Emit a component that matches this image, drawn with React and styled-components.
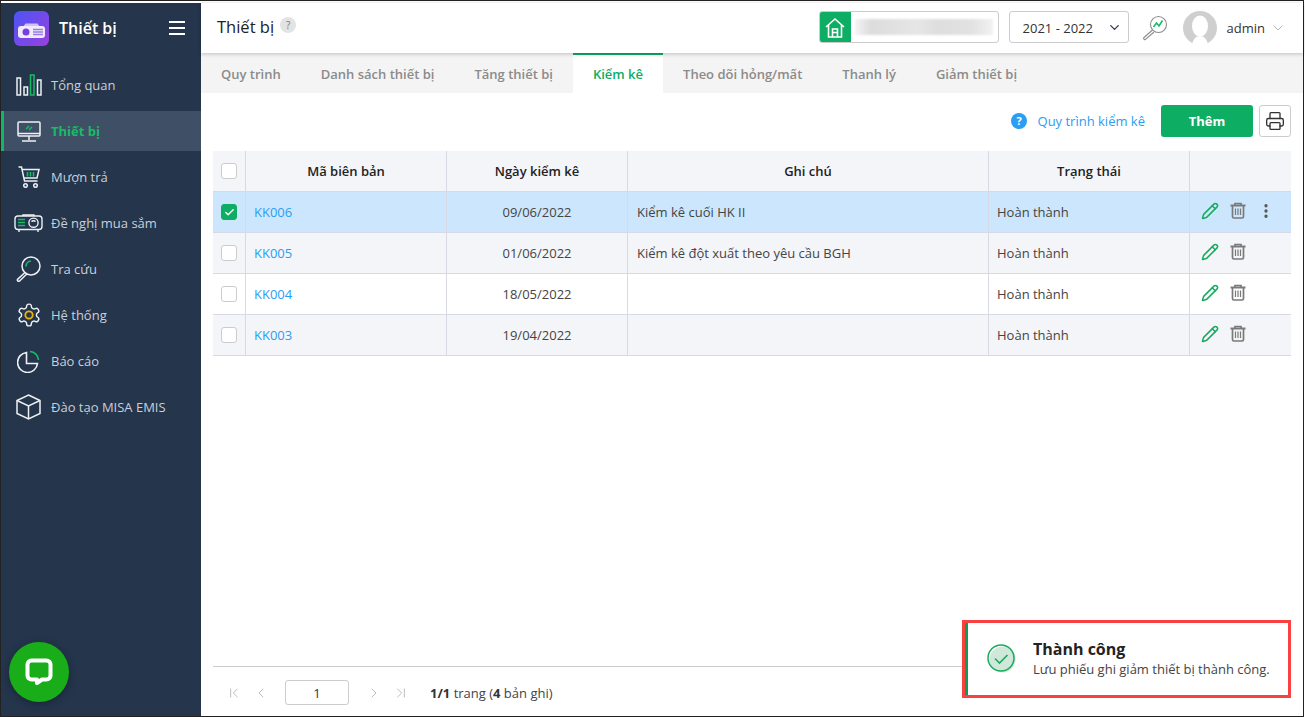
import React from 'react'
import styled, { createGlobalStyle } from 'styled-components'
import { ChevronDown, ChevronLeft, ChevronRight, ChevronFirst, ChevronLast, Check, Printer, Pencil, MoreVertical } from 'lucide-react'

const GlobalStyle = createGlobalStyle`
  html, body {
    margin: 0;
    padding: 0;
    background: #fff;
    overflow: hidden;
  }
  * {
    box-sizing: border-box;
  }
`

const Frame = styled.div`
  position: relative;
  width: 1304px;
  height: 717px;
  padding-top: 2px;
  border: 1px solid #222;
  display: flex;
  font-family: 'Open Sans', 'Noto Sans', sans-serif;
  font-size: 13px;
  color: #333;
  background: #fff;
`

const Sidebar = styled.aside`
  width: 200px;
  flex: none;
  background: #24354c;
  display: flex;
  flex-direction: column;
`

const Brand = styled.div`
  height: 62px;
  padding: 8px 16px 0 13px;
  display: flex;
  align-items: flex-start;
  gap: 10px;
`

const BrandTitle = styled.div`
  flex: 1;
  font-size: 16px;
  font-weight: 600;
  color: #fff;
  line-height: 34px;
`

const Burger = styled.div`
  width: 16px;
  margin-top: 10px;
  height: 14px;
  border-top: 2px solid #fff;
  border-bottom: 2px solid #fff;
  position: relative;
  &::after {
    content: '';
    position: absolute;
    left: 0;
    right: 0;
    top: 4px;
    height: 2px;
    background: #fff;
  }
`

const Menu = styled.nav`
  display: flex;
  flex-direction: column;
  gap: 6px;
`

const MenuItem = styled.div`
  height: 40px;
  display: flex;
  align-items: center;
  gap: 8px;
  padding-left: ${p => (p.$active ? '10px' : '13px')};
  border-left: ${p => (p.$active ? '3px solid #10b866' : 'none')};
  background: ${p => (p.$active ? '#3f4f65' : 'transparent')};
  color: ${p => (p.$active ? '#19bb67' : '#c9d0d8')};
  font-weight: ${p => (p.$active ? 700 : 400)};
`

const MenuIcon = styled.span`
  width: 29px;
  height: 30px;
  display: flex;
  align-items: center;
  justify-content: center;
  flex: none;
`

const ChatButton = styled.div`
  position: absolute;
  left: 8px;
  top: 641px;
  width: 60px;
  height: 60px;
  border-radius: 50%;
  background: #19ad19;
  box-shadow: 0 2px 8px rgba(0, 0, 0, 0.3);
  display: flex;
  align-items: center;
  justify-content: center;
`

const Main = styled.main`
  flex: 1;
  min-width: 0;
  display: flex;
  flex-direction: column;
`

const Header = styled.header`
  height: 50px;
  flex: none;
  padding: 0 17px 0 16px;
  display: flex;
  align-items: center;
  box-shadow: 0 1px 4px rgba(0, 0, 0, 0.22);
  position: relative;
  z-index: 1;
`

const PageTitle = styled.h1`
  margin: 0 6px 4px 0;
  font-size: 16.5px;
  font-weight: 400;
  color: #222;
`

const HelpDot = styled.span`
  width: 16px;
  height: 16px;
  border-radius: 50%;
  background: #e3e3e3;
  color: #777;
  font-size: 10px;
  text-align: center;
  line-height: 16px;
  margin-bottom: 6px;
`

const Spacer = styled.div`
  flex: 1;
`

const SchoolBox = styled.div`
  width: 180px;
  height: 32px;
  border: 1px solid #ccc;
  border-radius: 3px;
  display: flex;
  align-items: center;
  overflow: hidden;
  margin-right: 10px;
  margin-bottom: 2px;
`

const HomeBadge = styled.div`
  width: 31px;
  height: 32px;
  background: #0ead64;
  display: flex;
  align-items: center;
  justify-content: center;
  flex: none;
`

const BlurName = styled.div`
  width: 138px;
  height: 16px;
  margin-left: 4px;
  background: linear-gradient(90deg, #f4f4f4, #dcdcdc 12%, #e6e6e6 45%, #dedede 60%, #e2e2e2 85%, #f2f2f2);
  filter: blur(1px);
`

const YearSelect = styled.div`
  width: 120px;
  height: 32px;
  border: 1px solid #ccc;
  border-radius: 3px;
  padding: 1px 6px 0 13px;
  display: flex;
  align-items: center;
  justify-content: space-between;
  color: #333;
  font-size: 13px;
  margin-right: 13px;
  margin-bottom: 2px;
`

const UserName = styled.span`
  margin: 0 5px 0 10px;
  color: #333;
`

const AvatarGap = styled.span`
  width: 15px;
  flex: none;
`

const Tabs = styled.div`
  height: 40px;
  flex: none;
  background: #f4f4f4;
  display: flex;
`

const Tab = styled.div`
  padding: 0 20px;
  line-height: ${p => (p.$active ? '38px' : '42px')};
  font-weight: 600;
  font-size: 13px;
  color: ${p => (p.$active ? '#0ead64' : '#8b8b8b')};
  background: ${p => (p.$active ? '#fff' : 'transparent')};
  border-top: ${p => (p.$active ? '2px solid #0ead64' : 'none')};
`

const Toolbar = styled.div`
  height: 58px;
  flex: none;
  padding: 12px 12px 0 0;
  display: flex;
  justify-content: flex-end;
  align-items: flex-start;
`

const ProcessLink = styled.a`
  display: flex;
  align-items: center;
  gap: 11px;
  height: 32px;
  color: #2a9df4;
  margin-right: 16px;
`

const AddButton = styled.button`
  width: 92px;
  height: 32px;
  border: none;
  border-radius: 3px;
  background: #0ead64;
  color: #fff;
  font: 700 13px 'Open Sans', sans-serif;
  margin-right: 6px;
`

const PrintButton = styled.button`
  width: 32px;
  height: 32px;
  padding: 0;
  border: 1px solid #ccc;
  border-radius: 3px;
  background: #fff;
  display: flex;
  align-items: center;
  justify-content: center;
  color: #333;
`

const TableWrap = styled.div`
  flex: 1;
  padding: 0 12px;
`

const Grid = styled.div`
  display: grid;
  grid-template-columns: 33px 201px 181px 361px 201px 101px;
  grid-auto-rows: 41px;
  width: 1078px;
`

const Row = styled.div`
  display: contents;
`

const HeadCell = styled.div`
  height: 41px;
  background: #f4f5f8;
  border-right: 1px solid #d9d9e6;
  border-bottom: 1px solid #d9d9e6;
  display: flex;
  align-items: center;
  justify-content: center;
  font-weight: 600;
  color: #222;
  &:last-child {
    border-right: none;
  }
`

const Cell = styled.div`
  height: 41px;
  background: ${p => p.$bg};
  border-right: ${p => (p.$last ? 'none' : '1px solid #d9d9e6')};
  border-bottom: 1px solid #d9d9e6;
  display: flex;
  align-items: center;
  padding: 0 8px;
  justify-content: ${p => (p.$center ? 'center' : 'flex-start')};
  color: #444;
`

const NoteCell = styled(Cell)`
  padding-left: 9px;
`

const CodeLink = styled.a`
  color: #2a9df4;
`

const CheckBox = styled.span`
  width: 16px;
  height: 16px;
  border-radius: 3px;
  border: 1px solid ${p => (p.$checked ? '#0ead64' : '#ccc')};
  background: ${p => (p.$checked ? '#0ead64' : '#fff')};
  display: flex;
  align-items: center;
  justify-content: center;
  flex: none;
`

const Actions = styled.div`
  display: flex;
  align-items: center;
  gap: 11px;
  padding-left: 3px;
  margin-top: -3px;
`

const Footer = styled.footer`
  height: 50px;
  margin: 0 12px;
  flex: none;
  border-top: 1px solid #ccc;
  display: flex;
  align-items: center;
  padding: 2px 0 0 13px;
  color: #444;
`

const PagerIcons = styled.div`
  display: flex;
  align-items: center;
  gap: 11px;
  color: #bdbdbd;
`

const PageInput = styled.div`
  width: 64px;
  height: 25px;
  margin: 0 17px 0 16px;
  border: 1px solid #ccc;
  border-radius: 3px;
  text-align: center;
  line-height: 24px;
  color: #333;
`

const PageInfo = styled.span`
  margin-left: 21px;
  b {
    font-weight: 700;
    color: #333;
  }
`

const Toast = styled.div`
  position: absolute;
  left: 961px;
  top: 619px;
  width: 329px;
  height: 78px;
  border: 3px solid #fa4141;
  background: #fff;
  display: flex;
  align-items: center;
  z-index: 3;
  &::before {
    content: '';
    width: 3px;
    height: 100%;
    background: #119a57;
    flex: none;
  }
`

const ToastIcon = styled.span`
  margin: 0 16px 0 19px;
  display: flex;
`

const ToastBody = styled.div`
  padding-bottom: 2px;
`

const ToastTitle = styled.div`
  font-size: 16px;
  font-weight: 700;
  color: #222;
  line-height: 22px;
`

const ToastText = styled.div`
  font-size: 13px;
  color: #444;
  line-height: 18px;
`

const BarsIcon = () => (
  <svg width="26" height="22" viewBox="0 0 26 22" fill="none" stroke="#eef0f3" strokeWidth="1.5">
    <rect x="1" y="4" width="3.5" height="17" />
    <rect x="8" y="13" width="3.5" height="8" />
    <rect x="14.5" y="1" width="3.5" height="20" stroke="#19bb67" />
    <rect x="21.5" y="6" width="3.5" height="15" />
  </svg>
)

const MonitorIcon = () => (
  <svg width="24" height="21" viewBox="0 0 24 21" fill="none" stroke="#eef0f3" strokeWidth="1.5">
    <rect x="1" y="1" width="22" height="14" rx="1" />
    <path d="M1 12.5h22M12 15v4M5 20h14" />
    <path d="M9 8l3-3M12 9l3-3" stroke="#19bb67" />
  </svg>
)

const CartIcon = () => (
  <svg width="22" height="22" viewBox="0 0 22 22" fill="none" stroke="#eef0f3" strokeWidth="1.5">
    <path d="M0.5 1h3l3 14h13M4 3.5h17l-2 8.5H6" />
    <path d="M9.5 6v4.5M12.5 6v4.5M15.5 6v4.5" stroke="#19bb67" strokeWidth="1.6" />
    <circle cx="7.5" cy="19.5" r="1.8" />
    <circle cx="17.5" cy="19.5" r="1.8" />
  </svg>
)

const ProjectorIcon = () => (
  <svg width="29" height="18" viewBox="0 0 29 18" fill="none" stroke="#eef0f3" strokeWidth="1.4">
    <path d="M9 2V1h11v1" />
    <rect x="1" y="2" width="27" height="13.5" rx="3" />
    <path d="M5 15.5V18M24 15.5V18" />
    <path d="M4 5.5h7M4 8.5h7M4 11.5h7" stroke="#19bb67" strokeWidth="1.7" />
    <circle cx="19.5" cy="8.7" r="4.6" />
    <path d="M17.5 7.7a2.5 2.5 0 0 1 4 0" />
  </svg>
)

const SearchIcon = () => (
  <svg width="25" height="26" viewBox="0 0 25 26" fill="none" stroke="#eef0f3" strokeWidth="1.5">
    <circle cx="15" cy="10" r="9" />
    <path d="M9 16.5l-7.2 6.6a1.3 1.3 0 0 0 1.8 1.9L10.8 18" />
    <path d="M10 10.5a5.5 5.5 0 0 1 5-5.5" stroke="#19bb67" strokeWidth="1.7" />
  </svg>
)

const GearIcon = () => (
  <svg width="26" height="26" viewBox="0 0 24 24" fill="none" stroke="#eef0f3" strokeWidth="1.3">
    <path d="M12.22 2h-.44a2 2 0 0 0-2 2v.18a2 2 0 0 1-1 1.73l-.43.25a2 2 0 0 1-2 0l-.15-.08a2 2 0 0 0-2.73.73l-.22.38a2 2 0 0 0 .73 2.73l.15.1a2 2 0 0 1 1 1.72v.51a2 2 0 0 1-1 1.74l-.15.09a2 2 0 0 0-.73 2.73l.22.38a2 2 0 0 0 2.73.73l.15-.08a2 2 0 0 1 2 0l.43.25a2 2 0 0 1 1 1.73V20a2 2 0 0 0 2 2h.44a2 2 0 0 0 2-2v-.18a2 2 0 0 1 1-1.73l.43-.25a2 2 0 0 1 2 0l.15.08a2 2 0 0 0 2.73-.73l.22-.39a2 2 0 0 0-.73-2.73l-.15-.08a2 2 0 0 1-1-1.74v-.5a2 2 0 0 1 1-1.74l.15-.09a2 2 0 0 0 .73-2.73l-.22-.38a2 2 0 0 0-2.73-.73l-.15.08a2 2 0 0 1-2 0l-.43-.25a2 2 0 0 1-1-1.73V4a2 2 0 0 0-2-2z" />
    <circle cx="12" cy="12" r="3.4" stroke="#eab308" strokeWidth="1.7" />
  </svg>
)

const PieIcon = () => (
  <svg width="23" height="23" viewBox="0 0 23 23" fill="none" stroke="#eef0f3" strokeWidth="1.6">
    <path d="M9.5 2.5a10 10 0 1 0 11 11h-11z" />
    <path d="M13 1.5a9 9 0 0 1 8.5 8.5" stroke="#19bb67" strokeWidth="1.6" />
  </svg>
)

const BoxIcon = () => (
  <svg width="25" height="26" viewBox="0 0 25 26" fill="none" stroke="#eef0f3" strokeWidth="1.5">
    <path d="M12.5 1L24 6.5v13L12.5 25 1 19.5v-13z" />
    <path d="M1 6.5L12.5 12 24 6.5M12.5 12v13" />
  </svg>
)

const LogoIcon = () => (
  <svg width="35" height="35" viewBox="0 0 35 35">
    <defs>
      <linearGradient id="logoGrad" x1="0" y1="0" x2="1" y2="1">
        <stop offset="0" stopColor="#4b55f5" />
        <stop offset="1" stopColor="#9a3fe0" />
      </linearGradient>
    </defs>
    <rect width="35" height="35" rx="6" fill="url(#logoGrad)" />
    <path d="M9 16l2.5-3.5h12L26 16z" fill="#cfc2f6" />
    <rect x="4" y="15" width="27" height="12" rx="3" fill="#efeafc" />
    <circle cx="12" cy="21" r="3.5" fill="#7a3fe0" />
    <path d="M19 18.5h10M19 21h10M19 23.5h10" stroke="#9a7be8" strokeWidth="1.3" />
  </svg>
)

const HomeIcon = () => (
  <svg width="20" height="21" viewBox="0 0 20 21" fill="none" stroke="#fff" strokeWidth="1.6">
    <path d="M1 10L10 2l9 8M3.5 8v12h13V8M7.5 20v-8h5v8M7.5 15.5h5" />
  </svg>
)

const TrendIcon = () => (
  <svg width="26" height="26" viewBox="0 0 26 26" fill="none" stroke="#8d8d8d" strokeWidth="1.1">
    <circle cx="16.5" cy="9.5" r="8" />
    <path d="M10.5 15L2 22.5a1.2 1.2 0 0 0 1.8 1.7L12 17" />
    <path d="M11.5 12l3-4 2.5 3 3.5-5.5" stroke="#19bb67" strokeWidth="1.6" />
  </svg>
)

const Avatar = () => (
  <svg width="34" height="34" viewBox="0 0 34 34">
    <circle cx="17" cy="17" r="17" fill="#cfcfcf" />
    <ellipse cx="17" cy="15" rx="8" ry="10.5" fill="#fff" />
    <path d="M9 34c1-6 4-9 8-9s7 3 8 9z" fill="#fff" />
  </svg>
)

const HelpIcon = () => (
  <svg width="16" height="16" viewBox="0 0 16 16">
    <circle cx="8" cy="8" r="8" fill="#2a9df4" />
    <text x="8" y="12" textAnchor="middle" fill="#fff" fontSize="11" fontWeight="700" fontFamily="'Open Sans', sans-serif">?</text>
  </svg>
)

const TrashIcon = () => (
  <svg width="16" height="17" viewBox="0 0 16 17" fill="none" stroke="#7a7a7a" strokeWidth="1.7">
    <path d="M0.5 3.5h15" strokeWidth="2" />
    <path d="M5 3V1.5h6V3" />
    <path d="M2.5 4v10.5a1.5 1.5 0 0 0 1.5 1.5h8a1.5 1.5 0 0 0 1.5-1.5V4" />
    <path d="M5.5 6.5V13M8 6.5V13M10.5 6.5V13" strokeWidth="1.2" />
  </svg>
)

const ChatIcon = () => (
  <svg width="28" height="28" viewBox="0 0 28 28" fill="none" stroke="#fff" strokeWidth="4">
    <path d="M6.5 2.5h15a4 4 0 0 1 4 4v11a4 4 0 0 1-4 4h-4.5l-5 3.5v-3.5H6.5a4 4 0 0 1-4-4v-11a4 4 0 0 1 4-4z" strokeLinejoin="round" />
  </svg>
)

const SuccessIcon = () => (
  <svg width="30" height="30" viewBox="0 0 30 30" fill="none">
    <circle cx="15.5" cy="15.5" r="13" fill="#cfe8d9" />
    <circle cx="14" cy="14" r="13" stroke="#1aaa60" strokeWidth="1.5" />
    <path d="M8 14.5l4.5 4.5 8-8" stroke="#1aaa60" strokeWidth="1.6" />
  </svg>
)

const menuItems = [
  { label: 'Tổng quan', icon: <BarsIcon /> },
  { label: 'Thiết bị', icon: <MonitorIcon />, active: true },
  { label: 'Mượn trả', icon: <CartIcon /> },
  { label: 'Đề nghị mua sắm', icon: <ProjectorIcon /> },
  { label: 'Tra cứu', icon: <SearchIcon /> },
  { label: 'Hệ thống', icon: <GearIcon /> },
  { label: 'Báo cáo', icon: <PieIcon /> },
  { label: 'Đào tạo MISA EMIS', icon: <BoxIcon /> },
]

const tabs = ['Quy trình', 'Danh sách thiết bị', 'Tăng thiết bị', 'Kiểm kê', 'Theo dõi hỏng/mất', 'Thanh lý', 'Giảm thiết bị']

const rows = [
  { code: 'KK006', date: '09/06/2022', note: 'Kiểm kê cuối HK II', selected: true },
  { code: 'KK005', date: '01/06/2022', note: 'Kiểm kê đột xuất theo yêu cầu BGH' },
  { code: 'KK004', date: '18/05/2022', note: '' },
  { code: 'KK003', date: '19/04/2022', note: '' },
]

const rowBg = (row, i) => {
  if (row.selected) return '#cce7fd'
  return i % 2 === 1 ? '#f4f5f8' : '#fff'
}

export default function App() {
  return (
    <Frame>
      <GlobalStyle />
      <Sidebar>
        <Brand>
          <LogoIcon />
          <BrandTitle>Thiết bị</BrandTitle>
          <Burger />
        </Brand>
        <Menu>
          {menuItems.map(item => (
            <MenuItem key={item.label} $active={item.active}>
              <MenuIcon>{item.icon}</MenuIcon>
              {item.label}
            </MenuItem>
          ))}
        </Menu>
      </Sidebar>
      <ChatButton><ChatIcon /></ChatButton>

      <Main>
        <Header>
          <PageTitle>Thiết bị</PageTitle>
          <HelpDot>?</HelpDot>
          <Spacer />
          <SchoolBox>
            <HomeBadge><HomeIcon /></HomeBadge>
            <BlurName />
          </SchoolBox>
          <YearSelect>
            2021 - 2022
            <ChevronDown size={15} color="#3c3c50" strokeWidth={2.2} />
          </YearSelect>
          <TrendIcon />
          <AvatarGap />
          <Avatar />
          <UserName>admin</UserName>
          <ChevronDown size={16} color="#aaa" strokeWidth={1.3} />
        </Header>

        <Tabs>
          {tabs.map(t => (
            <Tab key={t} $active={t === 'Kiểm kê'}>{t}</Tab>
          ))}
        </Tabs>

        <Toolbar>
          <ProcessLink><HelpIcon />Quy trình kiểm kê</ProcessLink>
          <AddButton>Thêm</AddButton>
          <PrintButton><Printer size={20} strokeWidth={1.6} /></PrintButton>
        </Toolbar>

        <TableWrap>
          <Grid>
            <Row>
              <HeadCell><CheckBox /></HeadCell>
              <HeadCell>Mã biên bản</HeadCell>
              <HeadCell>Ngày kiểm kê</HeadCell>
              <HeadCell>Ghi chú</HeadCell>
              <HeadCell>Trạng thái</HeadCell>
              <HeadCell />
            </Row>
            {rows.map((row, i) => {
              const bg = rowBg(row, i)
              return (
                <Row key={row.code}>
                  <Cell $bg={bg} $center>
                    <CheckBox $checked={row.selected}>
                      {row.selected && <Check size={11} color="#fff" strokeWidth={3} />}
                    </CheckBox>
                  </Cell>
                  <Cell $bg={bg}><CodeLink>{row.code}</CodeLink></Cell>
                  <Cell $bg={bg} $center>{row.date}</Cell>
                  <NoteCell $bg={bg}>{row.note}</NoteCell>
                  <Cell $bg={bg}>Hoàn thành</Cell>
                  <Cell $bg={bg} $last>
                    <Actions>
                      <Pencil size={18} color="#1aaa60" strokeWidth={2} />
                      <TrashIcon />
                      {row.selected && <MoreVertical size={18} color="#555" strokeWidth={2.4} />}
                    </Actions>
                  </Cell>
                </Row>
              )
            })}
          </Grid>
        </TableWrap>

        <Footer>
          <PagerIcons>
            <ChevronFirst size={16} strokeWidth={1.5} />
            <ChevronLeft size={16} strokeWidth={1.5} />
          </PagerIcons>
          <PageInput>1</PageInput>
          <PagerIcons>
            <ChevronRight size={16} strokeWidth={1.5} />
            <ChevronLast size={16} strokeWidth={1.5} />
          </PagerIcons>
          <PageInfo><b>1/1</b> trang (<b>4</b> bản ghi)</PageInfo>
        </Footer>
      </Main>

      <Toast>
        <ToastIcon><SuccessIcon /></ToastIcon>
        <ToastBody>
          <ToastTitle>Thành công</ToastTitle>
          <ToastText>Lưu phiếu ghi giảm thiết bị thành công.</ToastText>
        </ToastBody>
      </Toast>
    </Frame>
  )
}
